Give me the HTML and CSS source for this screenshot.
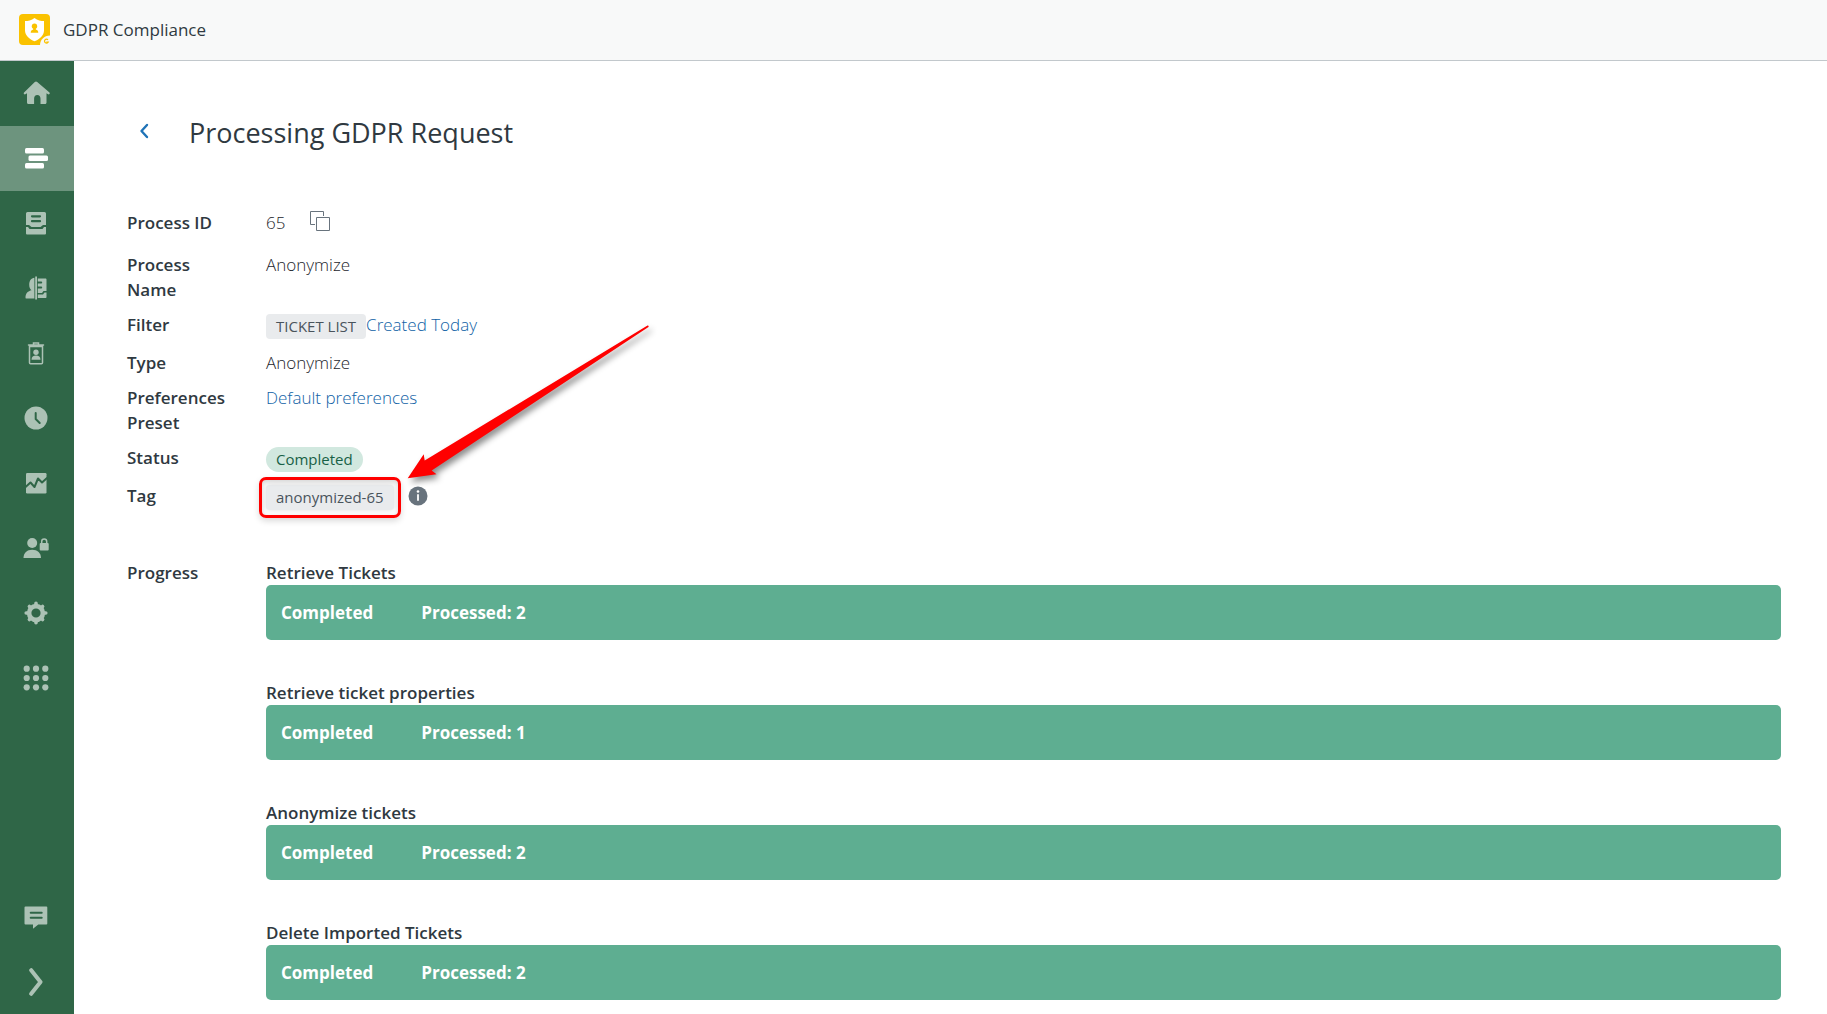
FILE: index.html
```html
<!DOCTYPE html>
<html lang="en">
<head>
<meta charset="utf-8">
<title>GDPR Compliance</title>
<link rel="stylesheet" href="styles.css">
</head>
<body>
<header class="topbar">
  <svg class="logo" viewBox="0 0 31 31" aria-hidden="true">
    <rect width="31" height="31" rx="4" fill="#fac200"/>
    <path d="M15.500 4C12.500 6.500 9 7 6 7v9.500c0 5 4.500 8.800 9.500 10.800 5-2 9.500-5.800 9.500-10.800V7c-3 0-6.500-.500-9.500-3z" fill="#fff"/>
    <circle cx="15.500" cy="12.300" r="2.700" fill="#fac200"/>
    <path d="M14.200 14h2.600v1.500c1.500.400 2.500 1.300 2.500 3.200h-7.600c0-1.900 1-2.800 2.500-3.200z" fill="#fac200"/>
    <path d="M21 31c0-5 4-9.500 10-9.500V31z" fill="#f8f9f9"/>
    <path d="M29 25.800a2 2 0 1 0 .300 2.200h-2" fill="none" stroke="#fac200" stroke-width="1.200"/>
  </svg>
  <span class="app-name">GDPR Compliance</span>
</header>
<div class="shell">
  <nav class="sidebar" aria-label="Main">
    <a class="nav-item" href="#" aria-label="Home"><svg viewBox="0 0 28 28"><path d="M14 2.500c.500 0 .800.200 1.200.500l12 10.200c.800.700.600 1.300.300 1.800-.400.600-1.100.600-1.800.100l-1.200-.9v9.300c0 .900-.500 1.500-1.500 1.500h-4.500v-5.300c0-2.200-1.100-3.700-3.200-3.700s-3.200 1.500-3.200 3.700V25H6.500C5.500 25 5 24.400 5 23.500v-9.300l-1.200.9c-.7.500-1.400.500-1.800-.1-.300-.5-.500-1.100.300-1.800L12.800 3c.4-.3.700-.5 1.200-.5z"/></svg></a>
    <a class="nav-item active" href="#" aria-label="Processes" aria-current="page"><svg viewBox="0 0 28 28"><rect x="3" y="4" width="19" height="5.500" rx="1.500"/><rect x="6.500" y="11.500" width="19.500" height="5.500" rx="1.500"/><rect x="3" y="19" width="19" height="5.500" rx="1.500"/></svg></a>
    <a class="nav-item" href="#" aria-label="Archive"><svg viewBox="0 0 28 28"><path fill-rule="evenodd" d="M5.500 3h17A1.500 1.500 0 0 1 24 4.500V16h-3l-2.500 2h-9L7 16H4V4.500A1.500 1.500 0 0 1 5.500 3zM10 6.200a1 1 0 0 0 0 2.200h8a1 1 0 0 0 0-2.200zm0 4.900a1 1 0 0 0 0 2.200h8a1 1 0 0 0 0-2.200z"/><path d="M4 18h2l1.500 2h13l1.500-2h2v6.500a1 1 0 0 1-1 1H5a1 1 0 0 1-1-1z"/></svg></a>
    <a class="nav-item" href="#" aria-label="User data"><svg viewBox="0 0 28 28"><path d="M12.400 3.800v20.700H4.300c-.6 0-.8-.5-.8-1 0-4.200 2.500-6.500 6-7.300-1.500-.8-2.300-3-2.300-5.400 0-4 2.100-6.700 5.100-7z"/><path d="M13.200 2.500H15v23h-1.800z"/><path fill-rule="evenodd" d="M15.800 4.500h7.700c.5 0 1 .4 1 1V17h-3l-1.500 2h-4.200v-4.500h3.400a1 1 0 0 0 0-2h-3.400v-3h3.400a1 1 0 0 0 0-2h-3.400z"/><path d="M15.800 20.500H21l1.500-2h2V23c0 .6-.4 1-1 1h-7.700z"/></svg></a>
    <a class="nav-item" href="#" aria-label="Deletion"><svg viewBox="0 0 28 28"><path d="M7.500 7.500h13v16.300a1 1 0 0 1-1 1h-11a1 1 0 0 1-1-1zM6.500 6h15M11.500 5.500V4h5v1.500" fill="none" stroke="currentColor" stroke-width="1.500" stroke-linecap="round"/><circle cx="14" cy="13.200" r="2.700"/><path d="M9.500 20.700c0-3 1.800-4.300 4.500-4.300s4.500 1.300 4.500 4.300z"/></svg></a>
    <a class="nav-item" href="#" aria-label="Schedule"><svg viewBox="0 0 28 28"><circle cx="14" cy="14" r="11.500"/><path class="cut" d="M13.700 9v6l4 4"/></svg></a>
    <a class="nav-item" href="#" aria-label="Reports"><svg viewBox="0 0 28 28"><rect x="4" y="4" width="20.500" height="20.500" rx="1.200"/><path class="cut" d="M3 18.500l5.500-5 4 4.500 3.500-8.500 4 4 5-4.500"/></svg></a>
    <a class="nav-item" href="#" aria-label="Permissions"><svg viewBox="0 0 28 28"><circle cx="10.200" cy="9" r="5"/><path d="M1.500 24c0-5 3.500-8.200 8.700-8.200S19 19 19 24z"/><rect x="17.700" y="9" width="9" height="7.500" rx="1"/><path d="M19.700 9.500V7.500a2.500 2.500 0 0 1 5 0v2" fill="none" stroke="currentColor" stroke-width="1.500"/></svg></a>
    <a class="nav-item" href="#" aria-label="Settings"><svg viewBox="0 0 28 28"><circle cx="14" cy="14" r="6.900" fill="none" stroke="currentColor" stroke-width="4.600"/><path d="M14 4.200v2M14 21.800v2M4.200 14h2M21.800 14h2M7.400 7.400l1 1M19.600 19.600l1 1M7.400 20.600l1-1M19.600 8.400l1-1" fill="none" stroke="currentColor" stroke-width="3.600" stroke-linecap="round"/></svg></a>
    <a class="nav-item" href="#" aria-label="Apps"><svg viewBox="0 0 28 28"><circle cx="4.700" cy="4.700" r="3.100"/><circle cx="14" cy="4.700" r="3.100"/><circle cx="23.300" cy="4.700" r="3.100"/><circle cx="4.700" cy="14" r="3.100"/><circle cx="14" cy="14" r="3.100"/><circle cx="23.300" cy="14" r="3.100"/><circle cx="4.700" cy="23.300" r="3.100"/><circle cx="14" cy="23.300" r="3.100"/><circle cx="23.300" cy="23.300" r="3.100"/></svg></a>
    <a class="nav-item push" href="#" aria-label="Feedback"><svg viewBox="0 0 28 28"><path d="M3.500 3.500h20.800a1 1 0 0 1 1 1v16a1 1 0 0 1-1 1h-8L11 25.800v-4.300H3.500a1 1 0 0 1-1-1v-16a1 1 0 0 1 1-1z"/><path class="cut" d="M8.700 9.700h11M8.700 14.700h11"/></svg></a>
    <button class="nav-item expand" type="button" aria-label="Expand menu"><svg viewBox="0 0 28 28"><path d="M9.200 2.200L18.500 14 9.200 25.800" fill="none" stroke="currentColor" stroke-width="4" stroke-linecap="round" stroke-linejoin="round"/></svg></button>
  </nav>
  <main class="content">
    <div class="title-row">
      <a class="back" href="#" aria-label="Back"><svg viewBox="0 0 10 16"><path d="M8 2L2.500 8 8 14" fill="none" stroke="currentColor" stroke-width="2.400" stroke-linecap="round" stroke-linejoin="round"/></svg></a>
      <h1 class="title">Processing GDPR Request</h1>
    </div>
    <dl class="details">
      <dt>Process ID</dt>
      <dd class="id-row"><span>65</span><button class="copy" type="button" aria-label="Copy"><svg viewBox="0 0 20 20"><path d="M5 13.500H.500V.500h13V5M6.500 6.500h13v13h-13z" fill="none" stroke="currentColor"/></svg></button></dd>
      <dt>Process Name</dt>
      <dd>Anonymize</dd>
      <dt>Filter</dt>
      <dd class="chip-row"><span class="chip">TICKET LIST</span><a class="link" href="#">Created Today</a></dd>
      <dt>Type</dt>
      <dd>Anonymize</dd>
      <dt>Preferences Preset</dt>
      <dd><a class="link" href="#">Default preferences</a></dd>
      <dt>Status</dt>
      <dd class="chip-row"><span class="chip done">Completed</span></dd>
      <dt>Tag</dt>
      <dd class="chip-row tag-row">
        <span class="chip marked">anonymized-65
          <svg class="arrow" viewBox="0 0 256 168" aria-hidden="true"><path d="M7.700 158.300L23.700 134.300 24.700 140.500 247.500 5.500Q249 5.200 248.500 7L31.700 150.500 36.500 154.300z"/></svg>
        </span>
        <svg class="info" viewBox="0 0 20 20" role="img" aria-label="Info"><circle cx="10" cy="10" r="9.500"/><circle cx="10" cy="5.500" r="1.300" fill="#fff"/><path d="M10 8.300v6.500" stroke="#fff" stroke-width="1.800"/></svg>
      </dd>
      <dt class="progress-label">Progress</dt>
      <dd class="progress">
        <section class="step"><h2>Retrieve Tickets</h2><div class="bar"><span>Completed</span><span>Processed: 2</span></div></section>
        <section class="step"><h2>Retrieve ticket properties</h2><div class="bar"><span>Completed</span><span>Processed: 1</span></div></section>
        <section class="step"><h2>Anonymize tickets</h2><div class="bar"><span>Completed</span><span>Processed: 2</span></div></section>
        <section class="step"><h2>Delete Imported Tickets</h2><div class="bar"><span>Completed</span><span>Processed: 2</span></div></section>
      </dd>
    </dl>
  </main>
</div>
</body>
</html>
```
FILE: styles.css
```css
* { box-sizing: border-box; }

body {
  margin: 0;
  min-height: 100vh;
  display: flex;
  flex-direction: column;
  background: #fff;
  color: #2f3941;
  font: 400 17px/25px "Segoe UI", "Open Sans", "Noto Sans", sans-serif;
}

.topbar {
  display: flex;
  align-items: center;
  gap: 13px;
  height: 61px;
  padding: 0 19px 1px;
  background: #f8f9f9;
  border-bottom: 1px solid #c2c8cc;
}
.logo { width: 31px; height: 31px; }

.shell { flex: 1; display: flex; }

.sidebar {
  flex: none;
  display: flex;
  flex-direction: column;
  width: 74px;
  background: #2f6647;
}
.nav-item {
  display: flex;
  align-items: center;
  justify-content: center;
  height: 65px;
  padding: 0 2px 1px 0;
  border: 0;
  background: none;
  color: #acc2b5;
}
.nav-item svg { width: 28px; height: 28px; fill: currentColor; }
.nav-item .cut {
  fill: none;
  stroke: #2f6647;
  stroke-width: 2;
  stroke-linecap: round;
  stroke-linejoin: round;
}
.nav-item.active { background: #6d947e; color: #fff; }
.nav-item.push { margin-top: auto; }
.nav-item.expand { height: 64px; padding-bottom: 0; }

.content { flex: 1; min-width: 0; padding: 52px 46px 14px 53px; }

.title-row { display: flex; align-items: center; gap: 40px; padding-left: 12px; }
.back { display: flex; padding-bottom: 4px; color: #1f73b7; }
.back svg { width: 10px; height: 16px; }
.title { margin: 0; font-size: 27px; font-weight: 400; line-height: 40px; }

.details {
  display: grid;
  grid-template-columns: 100px minmax(0, 1fr);
  gap: 10px 39px;
  margin: 57px 0 0;
}
dt { font-weight: 600; }
dd { margin: 0; color: #1c252c; font-weight: 300; }

.id-row { display: flex; align-items: flex-start; gap: 25px; min-height: 32px; }
.copy {
  display: flex;
  padding: 1px 0 0;
  border: 0;
  background: none;
  color: #68737d;
}
.copy svg { width: 20px; height: 20px; }

.link { color: #0f62a6; text-decoration: none; }

.chip-row { display: flex; align-items: flex-start; min-height: 28px; }
.chip {
  margin-top: 2px;
  padding: 0 10px;
  border-radius: 4px;
  background: #e9ebed;
  color: #49545c;
  font-size: 15px;
  font-weight: 400;
}
.chip.done { border-radius: 13px; background: #d1e8df; color: #186146; }

.chip.marked { position: relative; box-shadow: 0 0 5px rgba(0, 0, 0, .12); }
.chip.marked::before {
  content: "";
  position: absolute;
  inset: -8px -7px;
  border: 3px solid #f00;
  border-radius: 7px;
  box-shadow: 0 3px 6px rgba(0, 0, 0, .15), inset 0 2px 5px rgba(0, 0, 0, .18);
}
.arrow {
  position: absolute;
  left: 134px;
  top: -165px;
  width: 256px;
  height: 168px;
  overflow: visible;
  fill: #f00;
  filter: drop-shadow(3px 4px 3px rgba(0, 0, 0, .45));
}
.info { width: 20px; height: 20px; margin: 3px 0 0 14px; fill: #68737d; }

.progress-label, .progress { margin-top: 39px; }
.progress { display: grid; gap: 40px; }
.step h2 { margin: 0; color: #2f3941; font-size: 17px; font-weight: 600; line-height: 25px; }
.bar {
  display: flex;
  gap: 48px;
  padding: 15px;
  border-radius: 5px;
  background: #5eae91;
  color: #fff;
  font-weight: 700;
}
```
